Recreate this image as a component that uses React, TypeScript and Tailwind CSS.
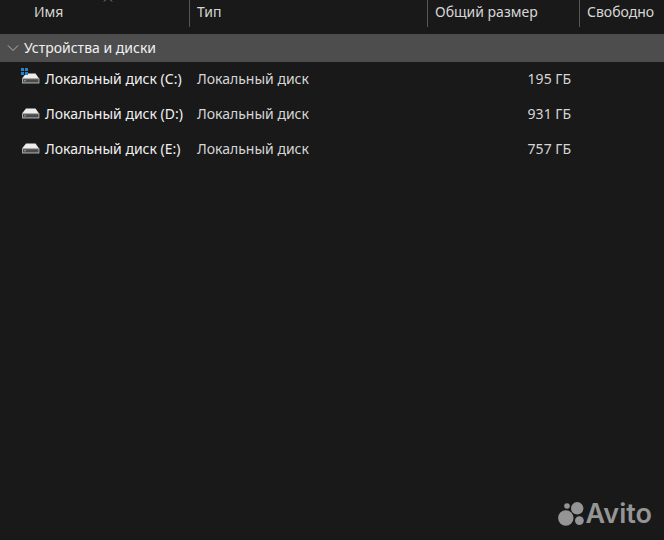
import React from 'react';

interface Drive {
  letter: string;
  size: string;
  system?: boolean;
}

const DRIVES: Drive[] = [
  { letter: 'C', size: '195 ГБ', system: true },
  { letter: 'D', size: '931 ГБ' },
  { letter: 'E', size: '757 ГБ' },
];

const DriveIcon: React.FC<{ system?: boolean }> = ({ system }) => (
  <svg width="20" height="24" viewBox="0 0 20 24" className="shrink-0" aria-hidden="true">
    <path d="M5 6.5h9.5L18 11.5H1z" fill="#ececec" />
    <rect x="1" y="11" width="17.4" height="5.6" rx="0.6" fill="#a8a8a8" />
    <rect x="2" y="12.2" width="15.4" height="3.2" fill="#4a4a4a" />
    <rect x="3" y="13" width="2" height="1.4" fill="#5fa36c" />
    {system && (
      <g fill="#2a80c4">
        <rect x="0" y="1" width="3" height="3" />
        <rect x="4" y="1" width="3" height="3" />
        <rect x="0" y="5" width="3" height="3" />
        <rect x="4" y="5" width="3" height="3" />
      </g>
    )}
  </svg>
);

const Watermark: React.FC = () => (
  <div className="absolute right-3 bottom-2 flex items-center gap-0.5 text-[#959595]">
    <svg width="26" height="24" viewBox="0 0 26 24" fill="currentColor" aria-hidden="true">
      <circle cx="7.8" cy="16" r="7.7" />
      <circle cx="19.2" cy="6.3" r="6.2" />
      <circle cx="9" cy="4" r="2.8" />
      <circle cx="21.4" cy="18.6" r="4.4" />
    </svg>
    <span className="font-['Inter',sans-serif] text-[27px] leading-9 font-semibold">Avito</span>
  </div>
);

const App: React.FC = () => {
  return (
    <div className="relative min-h-screen overflow-hidden bg-[#191919] font-['Noto_Sans',sans-serif] text-sm text-[#d6d6d6]">
      <table className="w-full table-fixed border-collapse whitespace-nowrap">
        <colgroup>
          <col className="w-[190px]" />
          <col className="w-[238px]" />
          <col className="w-[152px]" />
          <col />
        </colgroup>
        <thead>
          <tr className="text-left">
            <th className="relative p-0 pb-[7px] font-normal">
              <svg width="10" height="5" viewBox="0 0 10 5" className="absolute top-[-3px] left-[103px]" fill="none" stroke="#8a8a8a" aria-hidden="true">
                <path d="M1 4.5 5 0.5l4 4" />
              </svg>
              <div className="h-[27px] border-r border-[#555555] pl-[34px] leading-6">Имя</div>
            </th>
            <th className="p-0 pb-[7px] font-normal">
              <div className="h-[27px] border-r border-[#555555] pl-[7px] leading-6">Тип</div>
            </th>
            <th className="p-0 pb-[7px] font-normal">
              <div className="h-[27px] border-r border-[#555555] pl-[7px] leading-6">Общий размер</div>
            </th>
            <th className="p-0 pb-[7px] font-normal">
              <div className="h-[27px] pl-[7px] leading-6">Свободно</div>
            </th>
          </tr>
        </thead>
        <tbody>
          <tr className="bg-[#4d4d4d]">
            <td colSpan={4} className="p-0">
              <button type="button" className="flex h-7 w-full items-center gap-[5px] pl-[7px] text-[#f0f0f0]">
                <svg width="12" height="8" viewBox="0 0 12 8" fill="none" stroke="#b5b5b5" aria-hidden="true">
                  <path d="M1 1.5 6 6.5l5-5" />
                </svg>
                Устройства и диски
              </button>
            </td>
          </tr>
          {DRIVES.map((drive) => (
            <tr key={drive.letter} className="h-[35px]">
              <td className="p-0 pb-0.5">
                <div className="flex items-center gap-1 pl-[21px] text-[#f0f0f0]">
                  <DriveIcon system={drive.system} />
                  Локальный диск ({drive.letter}:)
                </div>
              </td>
              <td className="p-0 pb-0.5 pl-[7px]">Локальный диск</td>
              <td className="p-0 pr-[9px] pb-0.5 text-right">{drive.size}</td>
              <td className="p-0" />
            </tr>
          ))}
        </tbody>
      </table>
      <Watermark />
    </div>
  );
};

export default App;
